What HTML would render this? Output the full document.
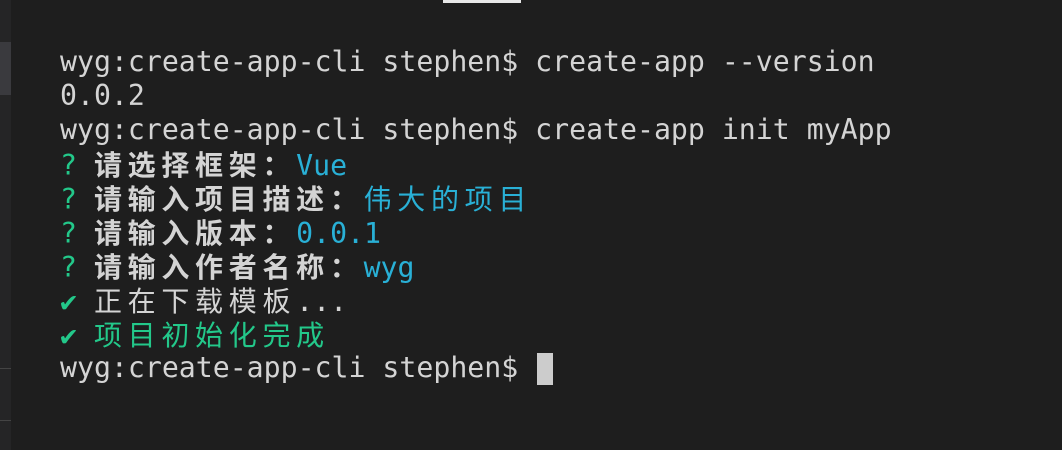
<!DOCTYPE html>
<html><head><meta charset="utf-8"><style>
html,body{margin:0;padding:0;background:#1e1e1e;width:1062px;height:450px;overflow:hidden;position:relative}
.strip{position:absolute;left:0;top:0;width:11px;height:450px;background:#252526}
.l{position:absolute;left:60px;font-family:"DejaVu Sans Mono","Noto Sans CJK SC",monospace;font-size:28.2px;line-height:34px;height:34px;color:#d4d4d4;white-space:pre}
.c{font-family:"Noto Sans CJK SC",sans-serif;letter-spacing:5.7px;font-size:28px}
.b{font-weight:bold}
.g{color:#23c88a}
.u{color:#29b0d6}
</style></head><body>
<div class="strip"></div>
<div style="position:absolute;left:0;top:42px;width:11px;height:53px;background:#3a3a3e"></div>
<div style="position:absolute;left:0;top:368px;width:11px;height:1px;background:#444"></div>
<div style="position:absolute;left:0;top:420px;width:11px;height:1px;background:#444"></div>
<div style="position:absolute;left:443px;top:0;width:78px;height:3px;background:#e8e8e8"></div>
<div class="l" style="top:45px">wyg:create-app-cli stephen$ create-app --version</div>
<div class="l" style="top:79px">0.0.2</div>
<div class="l" style="top:113px">wyg:create-app-cli stephen$ create-app init myApp</div>
<div class="l" style="top:147px"><span class="g">? </span><span class="c b">请选择框架：</span><span class="u">Vue</span></div>
<div class="l" style="top:181px"><span class="g">? </span><span class="c b">请输入项目描述：</span><span class="c u">伟大的项目</span></div>
<div class="l" style="top:215px"><span class="g">? </span><span class="c b">请输入版本：</span><span class="u">0.0.1</span></div>
<div class="l" style="top:249px"><span class="g">? </span><span class="c b">请输入作者名称：</span><span class="u">wyg</span></div>
<div class="l" style="top:283px"><span class="g">✔ </span><span class="c">正在下载模板</span>...</div>
<div class="l" style="top:317px"><span class="g">✔ </span><span class="c g">项目初始化完成</span></div>
<div class="l" style="top:351px">wyg:create-app-cli stephen$ </div>
<div style="position:absolute;left:537px;top:353px;width:16px;height:32px;background:#cccccc"></div>
</body></html>
